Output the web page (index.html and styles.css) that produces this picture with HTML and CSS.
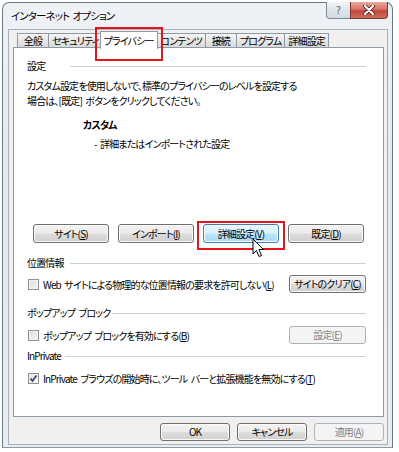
FILE: index.html
```html
<!DOCTYPE html>
<html lang="ja">
  <head>
    <meta charset="UTF-8" />
    <meta name="viewport" content="width=device-width, initial-scale=1.0" />
    <title>インターネット オプション</title>
    <link rel="stylesheet" href="styles.css">
  </head>
  <body>
    <div class="window">
      <div class="titlebar">
        <span class="title">インターネット オプション</span>
        <div class="caption-buttons">
          <span class="cap-btn help">?</span>
          <span class="cap-btn close">
            <svg width="14" height="10" viewBox="0 0 14 10">
              <path d="M3 1 L11 9 M11 1 L3 9" stroke="#5a2a26" stroke-width="4" stroke-linecap="round" />
              <path d="M3 1 L11 9 M11 1 L3 9" stroke="#fff" stroke-width="2.2" stroke-linecap="round" />
            </svg>
          </span>
        </div>
      </div>

      <div class="client">
        <div class="tabs">
          <span class="tab">全般</span>
          <span class="tab">セキュリティ</span>
          <span class="tab selected">プライバシー</span>
          <span class="tab">コンテンツ</span>
          <span class="tab">接続</span>
          <span class="tab">プログラム</span>
          <span class="tab">詳細設定</span>
        </div>

        <div class="panel">
          <div class="group-title">設定</div>
          <p class="desc">カスタム設定を使用しないで、標準のプライバシーのレベルを設定する<br>場合は、[既定] ボタンをクリックしてください。</p>
          <p class="level">カスタム</p>
          <p class="level-note">- 詳細またはインポートされた設定</p>

          <div class="btn-row">
            <span class="btn">サイト(<u>S</u>)</span>
            <span class="btn">インポート(<u>I</u>)</span>
            <span class="btn hover marked">詳細設定(<u>V</u>)</span>
            <span class="btn">既定(<u>D</u>)</span>
          </div>

          <div class="group-title location">位置情報</div>
          <div class="check-row first">
            <label class="check"><span class="box"></span><span>Web サイトによる物理的な位置情報の要求を許可しない(<u>L</u>)</span></label>
            <span class="btn">サイトのクリア(<u>C</u>)</span>
          </div>

          <div class="group-title popup">ポップアップ ブロック</div>
          <div class="check-row second">
            <label class="check"><span class="box"></span><span>ポップアップ ブロックを有効にする(<u>B</u>)</span></label>
            <span class="btn disabled">設定(<u>E</u>)</span>
          </div>

          <div class="group-title inprivate">InPrivate</div>
          <div class="check-row third">
            <label class="check">
              <span class="box checked">
                <svg width="9" height="9" viewBox="0 0 9 9">
                  <path d="M1.5 4.5 L3.5 7 L7.5 1.5" fill="none" stroke="#2b3d6b" stroke-width="1.6" />
                </svg>
              </span>
              <span>InPrivate ブラウズの開始時に、ツール バーと拡張機能を無効にする(<u>T</u>)</span>
            </label>
          </div>
        </div>

        <div class="footer">
          <span class="btn">OK</span>
          <span class="btn">キャンセル</span>
          <span class="btn disabled">適用(<u>A</u>)</span>
        </div>
      </div>
    </div>

    <svg class="cursor" width="13" height="21" viewBox="0 0 13 21">
      <path d="M1 1 L1 16 L4.5 12.5 L7 18.5 L9.5 17.5 L7 11.5 L11.5 11.5 Z" fill="#fff" stroke="#000" stroke-width="1" stroke-linejoin="round" />
    </svg>
  </body>
</html>
```

FILE: styles.css
```css
body {
  margin: 0;
  background: #fff;
  font-family: "Noto Sans CJK JP", "Liberation Sans", sans-serif;
  font-size: 10px;
  letter-spacing: -0.85px;
  word-spacing: 2px;
  font-feature-settings: "palt";
  color: #000;
  white-space: nowrap;
}

p {
  margin: 0;
}

.window {
  margin: 2px 0 0 2px;
  width: 391px;
  height: 446px;
  box-sizing: border-box;
  border: 1px solid #6a7684;
  border-bottom-color: #8c98a4;
  border-radius: 7px 7px 0 0;
  background: linear-gradient(#eef2f6, #e3e9ef 40%, #e8edf2);
  padding: 0 4px 2px 5px;
  display: flex;
  flex-direction: column;
}

.titlebar {
  height: 26px;
  display: flex;
  justify-content: space-between;
  align-items: flex-start;
}

.title {
  margin: 5px 0 0 3px;
  font-size: 10.5px;
  letter-spacing: -0.9px;
  line-height: 16px;
  text-shadow: 0 0 6px #fff, 0 0 3px #fff;
}

.caption-buttons {
  display: flex;
  margin-top: -1px;
}

.cap-btn {
  height: 17px;
  box-sizing: border-box;
  display: flex;
  align-items: center;
  justify-content: center;
  border: 1px solid #7d8a98;
  border-top: none;
}

.help {
  width: 24px;
  border-radius: 0 0 0 4px;
  border-right: none;
  background: linear-gradient(#f4f6f8, #dfe4ea 50%, #d3dae2);
  color: #5d6670;
  font-family: "DejaVu Sans", sans-serif;
  font-size: 10px;
  letter-spacing: 0;
}

.close {
  width: 38px;
  border-color: #763a36;
  border-radius: 0 0 4px 0;
  background: linear-gradient(#e9a99f, #d6746a 45%, #c14a3d 55%, #d26c5e);
}

.client {
  flex: 1;
  border: 1px solid #a6b1bc;
  background: #f0f0f0;
  padding: 3px 3px 0 4px;
  display: flex;
  flex-direction: column;
}

.tabs {
  display: flex;
  height: 14px;
  margin-left: 4px;
  position: relative;
  z-index: 1;
}

.tab {
  min-width: 24px;
  padding: 0 3px;
  text-align: center;
  line-height: 13px;
  border: 1px solid #8d9aa6;
  border-bottom: none;
  margin-right: -1px;
  background: linear-gradient(#f6f6f6, #e6e6e6 50%, #dadada);
}

.tab.selected {
  position: relative;
  margin: -2px -1px 0 -2px;
  padding: 1px 3px 0;
  height: 16px;
  line-height: 15px;
  background: #fff;
  z-index: 1;
}

/* red highlight boxes */
.tab.selected::after {
  content: "";
  position: absolute;
  left: -6px;
  right: -6px;
  top: -5px;
  bottom: -12px;
  border: 2px solid #e8141c;
}

.panel {
  height: 370px;
  box-sizing: border-box;
  border: 1px solid #8d9aa6;
  background: #fff;
  padding: 11px 17px 0 13px;
}

.group-title {
  display: flex;
  align-items: center;
  line-height: 14px;
}

.group-title::after {
  content: "";
  flex: 1;
  height: 1px;
  margin-left: 4px;
  background: #c8d0d8;
}

.group-title:first-child::after {
  margin-left: 25px;
}

.location::after {
  margin-left: 6px;
}

.popup::after {
  margin-left: 2px;
}

.desc {
  margin-top: 5px;
  line-height: 15px;
}

.level {
  margin: 9px 0 0 56px;
  line-height: 15px;
  font-weight: bold;
}

.level-note {
  margin: 4px 0 0 67px;
  line-height: 15px;
}

.btn {
  height: 19px;
  box-sizing: border-box;
  display: block;
  text-align: center;
  line-height: 17px;
  border: 1px solid #707070;
  border-radius: 3px;
  background: linear-gradient(#f3f3f3, #ebebeb 48%, #dddddd 52%, #cfcfcf);
  box-shadow: inset 0 0 0 1px #fbfbfb;
  flex-shrink: 0;
}

.btn u {
  text-decoration-thickness: 1px;
  text-underline-offset: 1px;
}

.btn.hover {
  border-color: #3c7fb1;
  background: linear-gradient(#eaf6fd, #d9f0fc 48%, #bee6fd 52%, #a7d9f5);
}

.btn.disabled {
  border-color: #adb2b5;
  background: #f4f4f4;
  box-shadow: none;
  color: #838383;
}

.btn-row {
  display: flex;
  gap: 9px;
  margin: 73px 0 0 6px;
}

.btn-row .btn {
  width: 76px;
}

.marked {
  position: relative;
}

.marked::after {
  content: "";
  position: absolute;
  left: -7px;
  right: -7px;
  top: -4px;
  bottom: -8px;
  border: 2px solid #e8141c;
}

.location {
  margin-top: 13px;
}

.popup {
  margin-top: 13px;
}

.inprivate {
  margin-top: 5px;
}

.check-row {
  display: flex;
  justify-content: space-between;
  align-items: center;
  height: 18px;
}

.check-row .btn {
  width: 77px;
  height: 18px;
  line-height: 16px;
}

.check-row.first {
  margin-top: 5px;
}

.check-row.second {
  margin-top: 6px;
}

.check-row.third {
  margin-top: 6px;
}

.check {
  display: flex;
  align-items: center;
  gap: 4px;
  margin-left: 1px;
}

.box {
  width: 11px;
  height: 11px;
  box-sizing: border-box;
  border: 1px solid #8f8f8f;
  background: linear-gradient(135deg, #dcdcdc, #f6f6f6);
  box-shadow: inset 0 0 0 1px #f4f4f4;
  display: flex;
  align-items: center;
  justify-content: center;
  flex-shrink: 0;
}

.box.checked {
  background: linear-gradient(135deg, #e2e2e2, #fafafa);
}

.footer {
  display: flex;
  justify-content: flex-end;
  gap: 7px;
  margin-top: 6px;
}

.footer .btn {
  width: 70px;
  height: 18px;
  line-height: 16px;
}

.cursor {
  position: absolute;
  left: 252px;
  top: 238px;
}
```
